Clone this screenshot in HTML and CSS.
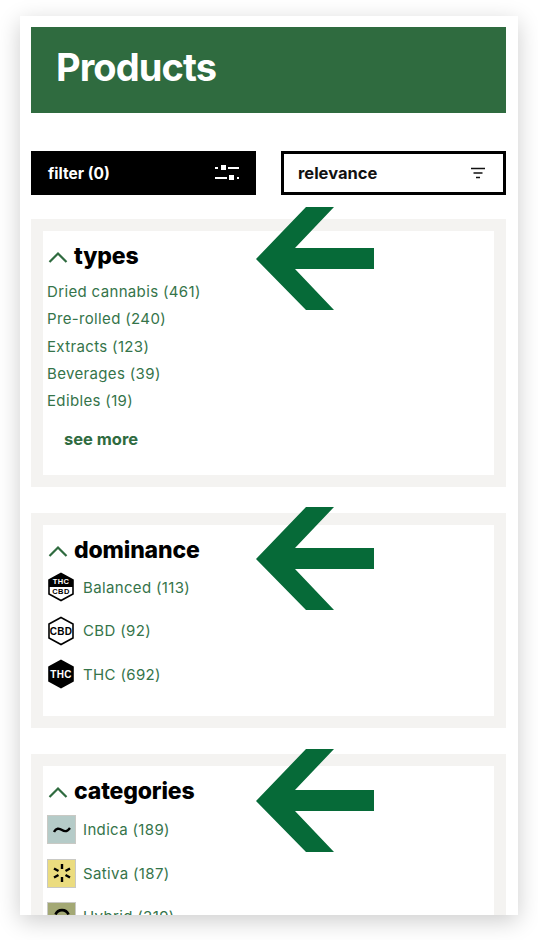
FILE: index.html
```html
<!DOCTYPE html>
<html lang="en">
<head>
<meta charset="utf-8">
<title>Products</title>
<link rel="stylesheet" href="styles.css">
</head>
<body>
<main class="card">
  <header class="hero"><h1 class="hero-title">Products</h1></header>
  <div class="toolbar">
    <button class="btn btn-filter"><span>filter (0)</span>
      <svg class="btn-icon" width="26" height="16" viewBox="0 0 26 16"><path fill="#fff" d="M1 2h3v2H1zM7 0h5v5H7zM14 2h11v2H14zM1 12h12v2H1zM15 10h5v5h-5zM23 12h2v2h-2z"/></svg>
    </button>
    <button class="btn btn-sort"><span>relevance</span>
      <svg width="16" height="12" viewBox="0 0 16 12"><path stroke="#111" stroke-width="1.4" d="M1 1.500h14M3.500 6h9M6 10.500h4"/></svg>
    </button>
  </div>

  <section class="panel">
    <div class="panel-inner panel-types">
      <h2 class="panel-title"><svg class="chev" width="20" height="12" viewBox="0 0 20 12"><path fill="none" stroke="#2f6b3f" stroke-width="2.200" d="M1.500 11 10 2.500 18.500 11"/></svg>types</h2>
      <ul class="plain">
        <li>Dried cannabis (461)</li>
        <li>Pre-rolled (240)</li>
        <li>Extracts (123)</li>
        <li>Beverages (39)</li>
        <li>Edibles (19)</li>
      </ul>
      <a class="more">see more</a>
    </div>
    <svg class="arrow arrow-types" width="118" height="104" viewBox="0 0 118 104"><path fill="#066a38" d="M0 52 50 0h28L39 41h79v21H39l39 41H50z"/></svg>
  </section>

  <section class="panel">
    <div class="panel-inner panel-dominance">
      <h2 class="panel-title"><svg class="chev" width="20" height="12" viewBox="0 0 20 12"><path fill="none" stroke="#2f6b3f" stroke-width="2.200" d="M1.500 11 10 2.500 18.500 11"/></svg>dominance</h2>
      <ul class="rich rich-dom">
        <li><svg class="hex" width="28" height="30" viewBox="0 0 28 30"><path fill="#fff" stroke="#000" stroke-width="1.600" d="M14 1.500 26 8v14l-12 6.500L2 22V8z"/><path fill="#000" d="M14 1.500 26 8v7H2V8z"/><text x="14" y="12" class="hex-s hex-w">THC</text><text x="14" y="22" class="hex-s">CBD</text></svg>Balanced (113)</li>
        <li><svg class="hex" width="28" height="30" viewBox="0 0 28 30"><path fill="#fff" stroke="#000" stroke-width="1.600" d="M14 1.500 26 8v14l-12 6.500L2 22V8z"/><text x="14" y="18.500" class="hex-m">CBD</text></svg>CBD (92)</li>
        <li><svg class="hex" width="28" height="30" viewBox="0 0 28 30"><path fill="#000" stroke="#000" stroke-width="1.600" d="M14 1.500 26 8v14l-12 6.500L2 22V8z"/><text x="14" y="18.500" class="hex-m hex-w">THC</text></svg>THC (692)</li>
      </ul>
    </div>
    <svg class="arrow arrow-dom" width="118" height="104" viewBox="0 0 118 104"><path fill="#066a38" d="M0 52 50 0h28L39 41h79v21H39l39 41H50z"/></svg>
  </section>

  <section class="panel">
    <div class="panel-inner">
      <h2 class="panel-title"><svg class="chev" width="20" height="12" viewBox="0 0 20 12"><path fill="none" stroke="#2f6b3f" stroke-width="2.200" d="M1.500 11 10 2.500 18.500 11"/></svg>categories</h2>
      <ul class="rich rich-cat">
        <li><span class="swatch swatch-indica"><svg width="18" height="8" viewBox="0 0 18 8"><path fill="none" stroke="#000" stroke-width="2.400" d="M1 6c2-4 5-4 8-2s5 2 8-2"/></svg></span>Indica (189)</li>
        <li><span class="swatch swatch-sativa"><svg width="20" height="20" viewBox="0 0 20 20"><path fill="none" stroke="#000" stroke-width="2.400" d="M10 1v5M10 14v5M2 5.500l4.500 2.500M13.500 12l4.500 2.500M2 14.500 6.500 12M13.500 8 18 5.500"/></svg></span>Sativa (187)</li>
        <li><span class="swatch swatch-hybrid"><svg width="18" height="18" viewBox="0 0 18 18"><path fill="none" stroke="#000" stroke-width="2.600" d="M2.500 6.500a7 7 0 0 1 13 0M2.500 11.500a7 7 0 0 0 13 0"/></svg></span>Hybrid (319)</li>
      </ul>
    </div>
    <svg class="arrow arrow-cat" width="118" height="104" viewBox="0 0 118 104"><path fill="#066a38" d="M0 52 50 0h28L39 41h79v21H39l39 41H50z"/></svg>
  </section>
</main>
</body>
</html>
```

FILE: styles.css
```css
* { box-sizing: border-box; }
html, body { margin: 0; height: 940px; overflow: hidden; background: #fff; }
body { padding: 16px 20px 25px; font-family: Inter, "Noto Sans", sans-serif; }
.card {
  height: 899px;
  padding: 11px 12px 11px 11px;
  background: #fff;
  overflow: hidden;
  box-shadow: 0 6px 22px rgba(0, 0, 0, .2);
}
.hero {
  height: 86px;
  margin-bottom: 38px;
  padding-left: 25px;
  display: flex;
  align-items: center;
  background: #2f6b3f;
}
.hero-title {
  margin: 0 0 7px;
  color: #fff;
  font-size: 38px;
  font-weight: 700;
  letter-spacing: -.9px;
}
.toolbar {
  display: grid;
  grid-template-columns: 225px 225px;
  justify-content: space-between;
  margin-bottom: 24px;
}
.btn {
  height: 44px;
  display: flex;
  align-items: center;
  justify-content: space-between;
  font-family: Inter, sans-serif;
  font-weight: 700;
  border-radius: 0;
}
.btn-filter { padding: 0 16px 0 17px; background: #000; color: #fff; border: 0; font-size: 15.500px; }
.btn-sort { padding: 0 17px 0 14px; background: #fff; color: #111; border: 3px solid #000; font-size: 16.500px; }
.panel {
  position: relative;
  padding: 12px;
  margin-bottom: 26px;
  background: #f4f3f1;
}
.panel-inner { padding: 10px 4px 0; background: #fff; }
.panel-types { height: 244px; }
.panel-dominance { height: 191px; }
.panel-title {
  display: flex;
  align-items: center;
  gap: 6px;
  margin: 0 0 7px;
  height: 30px;
  color: #000;
  font-size: 23px;
  font-weight: 800;
  letter-spacing: -.15px;
}
.chev { margin: 2px 0 0 1px; }
.plain, .rich { list-style: none; margin: 0; padding: 0; color: #35744a; font-size: 15px; letter-spacing: .35px; }
.plain li { height: 27.300px; line-height: 27.300px; }
.more {
  display: block;
  margin: 15px 0 0 17px;
  color: #2f6b3f;
  font-size: 16.500px;
  font-weight: 700;
}
.rich li { display: flex; align-items: center; gap: 8px; height: 28px; margin-bottom: 15.500px; }
.rich-dom { margin-top: 8px; }
.rich-cat { margin-top: 9px; }
.rich-cat li { height: 29px; margin-bottom: 14.500px; gap: 7px; }
.hex { flex: none; }
.hex-s, .hex-m { font-family: "Liberation Sans", sans-serif; font-weight: 700; text-anchor: middle; fill: #000; }
.hex-s { font-size: 7.500px; }
.hex-m { font-size: 10px; }
.hex-w { fill: #fff; }
.swatch {
  flex: none;
  width: 29px;
  height: 29px;
  display: flex;
  align-items: center;
  justify-content: center;
  border: 1px solid #c9c9c4;
}
.swatch-indica { background: #b5cbc8; }
.swatch-sativa { background: #ebdc7f; }
.swatch-hybrid { background: #a3a874; }
.arrow { position: absolute; left: 225px; }
.arrow-types { top: -12px; }
.arrow-dom { top: -6px; }
.arrow-cat { top: -5px; }
```
